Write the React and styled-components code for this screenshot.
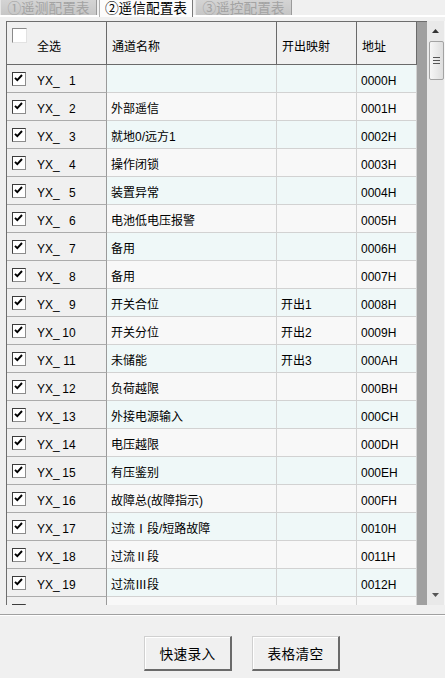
import React from 'react'
import styled, { createGlobalStyle } from 'styled-components'

const GlobalStyle = createGlobalStyle`
  html, body {
    margin: 0;
    padding: 0;
    background: #f0f0f0;
  }
  * { box-sizing: border-box; }
`;

const rows = [
  ['', '', '0000H'],
  ['外部遥信', '', '0001H'],
  ['就地0/远方1', '', '0002H'],
  ['操作闭锁', '', '0003H'],
  ['装置异常', '', '0004H'],
  ['电池低电压报警', '', '0005H'],
  ['备用', '', '0006H'],
  ['备用', '', '0007H'],
  ['开关合位', '开出1', '0008H'],
  ['开关分位', '开出2', '0009H'],
  ['未储能', '开出3', '000AH'],
  ['负荷越限', '', '000BH'],
  ['外接电源输入', '', '000CH'],
  ['电压越限', '', '000DH'],
  ['有压鉴别', '', '000EH'],
  ['故障总(故障指示)', '', '000FH'],
  ['过流Ⅰ段/短路故障', '', '0010H'],
  ['过流Ⅱ段', '', '0011H'],
  ['过流Ⅲ段', '', '0012H'],
];

const tabs = ['①遥测配置表', '②遥信配置表', '③遥控配置表'];

const Check = () => (
  <svg width="9" height="8" viewBox="0 0 9 8">
    <path d="M1 3.8 L3.3 6.2 L8 1" fill="none" stroke="#000" strokeWidth="1.9" />
  </svg>
);

const App = () => {
  return (
    <Window>
      <GlobalStyle />
      <TabBar>
        {tabs.map((t, i) => (
          <Tab key={t} $active={i === 1}>{t}</Tab>
        ))}
      </TabBar>

      <TabPage>
        <Grid>
          <HeaderRow>
            <HeadCell>
              <Box $head />
              <HeadLabel>全选</HeadLabel>
            </HeadCell>
            <HeadCell>通道名称</HeadCell>
            <HeadCell>开出映射</HeadCell>
            <HeadCell>地址</HeadCell>
          </HeaderRow>

          {rows.map((r, i) => (
            <Row key={i}>
              <Cell $first>
                <Box><Check /></Box>
                <Label>YX_<Num>{i + 1}</Num></Label>
              </Cell>
              <Cell $odd={i % 2 === 0}>{r[0]}</Cell>
              <Cell $odd={i % 2 === 0}>{r[1]}</Cell>
              <Cell $odd={i % 2 === 0}>{r[2]}</Cell>
            </Row>
          ))}

          {/* next row, only its top edge shows above the grid's bottom */}
          <Row>
            <Cell $first><Box><Check /></Box></Cell>
            <Cell />
            <Cell />
            <Cell />
          </Row>
        </Grid>

        <ScrollBar>
          <ArrowBtn>
            <svg width="7" height="4" viewBox="0 0 7 4"><polygon points="3.5,0 7,4 0,4" fill="#333" /></svg>
          </ArrowBtn>
          <Thumb>
            <Grip />
            <Grip />
            <Grip />
          </Thumb>
          <Track />
          <ArrowBtn>
            <svg width="7" height="4" viewBox="0 0 7 4"><polygon points="0,0 7,0 3.5,4" fill="#555" /></svg>
          </ArrowBtn>
        </ScrollBar>
      </TabPage>

      <ButtonBar>
        <Button>快速录入</Button>
        <Button>表格清空</Button>
      </ButtonBar>
    </Window>
  )
}

export default App

const font = `"Liberation Sans", "Noto Sans CJK SC", sans-serif`;

const Window = styled.div`
  width: 445px;
  height: 678px;
  display: flex;
  flex-direction: column;
  background: #f0f0f0;
  overflow: hidden;
  font-family: ${font};
  color: #000;
`;

const TabBar = styled.div`
  display: flex;
  height: 15px;
  position: relative;
  z-index: 1;
`;

const Tab = styled.div`
  width: ${p => p.$active ? '94px' : '97px'};
  height: ${p => p.$active ? '17px' : '15px'};
  margin-right: 2px;
  padding-top: 2px;
  font-size: 13.7px;
  line-height: 13px;
  text-align: center;
  white-space: nowrap;
  color: ${p => p.$active ? '#000' : '#a3a3a3'};
  background: ${p => p.$active ? '#fcfcfc' : 'linear-gradient(#d4d4d4, #c6c6c6)'};
  border-left: 1px solid ${p => p.$active ? '#b0b0b0' : '#e6e6e6'};
  border-right: 1px solid ${p => p.$active ? '#7a7a7a' : '#9a9a9a'};
`;

const TabPage = styled.div`
  display: flex;
  border-top: 2px solid #fff;
  border-bottom: 1px solid #a0a0a0;
  box-shadow: 0 1px #fff;
  padding: 4px 0 9px 6px;
`;

const Grid = styled.div`
  width: 421px;
  height: 584px;
  overflow: hidden;
  background: #a0a0a0;
  border-top: 1px solid #6e6e6e;
  border-left: 1px solid #6e6e6e;
`;

const HeaderRow = styled.div`
  display: grid;
  grid-template-columns: 100px 170px 80px 60px;
  height: 43px;
`;

const HeadCell = styled.div`
  display: flex;
  align-items: center;
  padding: 7px 0 0 5px;
  background: #f0f0f0;
  border-right: 1px solid #6a6a6a;
  border-bottom: 1px solid #6a6a6a;
  font-size: 12px;
  line-height: 14px;
`;

const HeadLabel = styled.span`
  margin-left: 10px;
`;

const Row = styled.div`
  display: grid;
  grid-template-columns: 100px 170px 80px 60px;
  height: 28px;
`;

const Cell = styled.div`
  display: flex;
  align-items: center;
  padding: 4px 0 0 ${p => p.$first ? '5px' : '4px'};
  background: ${p => p.$first ? '#f0f0f0' : p.$odd ? '#eff8f8' : '#f8f8f8'};
  border-right: 1px solid ${p => p.$first ? '#9a9a9a' : '#d2d2d2'};
  border-bottom: 1px solid ${p => p.$first ? '#ababab' : '#d2d2d2'};
  font-size: 12px;
  line-height: 14px;
  white-space: nowrap;
`;

const Box = styled.span`
  flex: none;
  align-self: flex-start;
  width: ${p => p.$head ? '15px' : '14px'};
  height: ${p => p.$head ? '15px' : '14px'};
  margin-top: ${p => p.$head ? '-1px' : '3px'};
  display: flex;
  align-items: center;
  justify-content: center;
  padding: 0 2px 2px 0;
  background: #fff;
  border: 1px solid;
  border-color: ${p => p.$head ? '#8a8a8a #e2e2e2 #e2e2e2 #8a8a8a' : '#3c3c3c #8c8c8c #8c8c8c #3c3c3c'};
`;

const Label = styled.span`
  margin-left: 11px;
  display: flex;
`;

const Num = styled.span`
  display: inline-block;
  width: 16px;
  text-align: right;
`;

const ScrollBar = styled.div`
  width: 18px;
  height: 584px;
  display: flex;
  flex-direction: column;
  align-items: center;
  background: #e9e9e9;
  border-right: 1px solid #f6f6f6;
`;

const ArrowBtn = styled.div`
  height: 20px;
  width: 100%;
  display: flex;
  align-items: center;
  justify-content: center;
`;

const Thumb = styled.div`
  width: 15px;
  height: 39px;
  margin-left: 1px;
  display: flex;
  flex-direction: column;
  justify-content: center;
  align-items: center;
  gap: 2px;
  border: 1px solid #a3a3a3;
  border-radius: 2px;
  background: linear-gradient(to right, #f6f6f6, #dedede);
`;

const Grip = styled.span`
  width: 7px;
  height: 1px;
  background: #555;
`;

const Track = styled.div`
  flex: 1;
`;

const ButtonBar = styled.div`
  display: flex;
  gap: 20px;
  padding: 21px 0 0 144px;
`;

const Button = styled.button`
  width: 88px;
  height: 35px;
  padding: 0;
  font-family: ${font};
  font-size: 13.7px;
  color: #000;
  background: #f0f0f0;
  border-style: solid;
  border-width: 1px 2px 2px 1px;
  border-color: #d0d0d0 #6a6a6a #6a6a6a #d0d0d0;
  box-shadow: inset 1px 1px #fff;
  letter-spacing: 0.3px;
`;
